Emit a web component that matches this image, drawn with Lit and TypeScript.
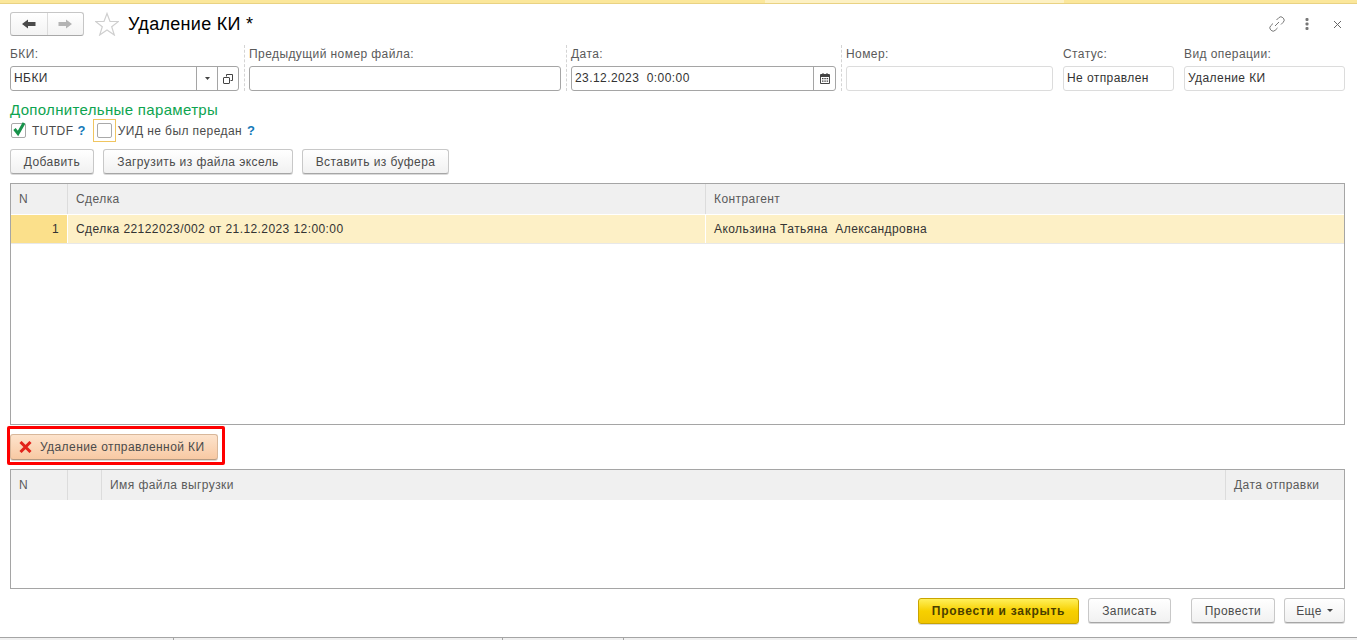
import {LitElement, html, css} from 'lit';
import {customElement} from 'lit/decorators.js';

@customElement('app-root')
class AppRoot extends LitElement {

    render() {
        return html`
            <div class="top-strip"><span class="lighter"></span></div>

            <header class="title-bar">
                <div class="nav">
                    <span class="nav-btn">
                        <svg width="16" height="12" viewBox="0 0 16 12"><path fill="#4a4a4a" d="M1 6l6-4.500V4h7.500v4H7v2.500z"/></svg>
                    </span>
                    <span class="nav-btn">
                        <svg width="16" height="12" viewBox="0 0 16 12"><path fill="#b4b4b4" d="M15 6L9 1.500V4H1.500v4H9v2.500z"/></svg>
                    </span>
                </div>
                <svg class="star" width="24" height="24" viewBox="0 0 24 24"><path fill="#fff" stroke="#cfcfcf" stroke-width="1.200" d="M12 1.500l3 8h8.500l-6.800 5.200 2.600 8.300-7.300-5.100-7.300 5.100 2.600-8.300L.5 9.500H9z"/></svg>
                <h1>Удаление КИ *</h1>
                <div class="window-icons">
                    <svg width="16" height="16" viewBox="0 0 16 16"><g fill="none" stroke="#777" stroke-width="1"><path d="M6 10l4-4"/><path d="M7.500 4l2.300-2.300a2.900 2.900 0 0 1 4.100 0l.4.400a2.900 2.900 0 0 1 0 4.100L12 8.500"/><path d="M8.500 12l-2.300 2.300a2.900 2.900 0 0 1-4.100 0l-.4-.4a2.900 2.900 0 0 1 0-4.100L4 7.500"/></g></svg>
                    <svg width="4" height="12" viewBox="0 0 4 12"><g fill="#777"><rect x=".5" y="0" width="3" height="3" rx="1"/><rect x=".5" y="4.500" width="3" height="3" rx="1"/><rect x=".5" y="9" width="3" height="3" rx="1"/></g></svg>
                    <svg class="close" width="9" height="9" viewBox="0 0 9 9"><path fill="none" stroke="#666" stroke-width="1" d="M1 1l7 7M8 1L1 8"/></svg>
                </div>
            </header>

            <section class="fields">
                <div class="field">
                    <label>БКИ:</label>
                    <div class="input">
                        <span class="value">НБКИ</span>
                        <span class="addon narrow"><svg width="5" height="3" viewBox="0 0 5 3"><path fill="#444" d="M0 0h5L2.500 3z"/></svg></span>
                        <span class="addon">
                            <svg width="10" height="10" viewBox="0 0 10 10"><g fill="none" stroke="#444" stroke-width="1"><path d="M3.500 2.500v-2h6v6h-2"/><rect x=".5" y="3.500" width="6" height="6" rx=".5"/></g></svg>
                        </span>
                    </div>
                </div>
                <div class="sep"></div>
                <div class="field">
                    <label>Предыдущий номер файла:</label>
                    <div class="input"></div>
                </div>
                <div class="sep"></div>
                <div class="field">
                    <label>Дата:</label>
                    <div class="input">
                        <span class="value">23.12.2023&nbsp; 0:00:00</span>
                        <span class="addon wide">
                            <svg width="10" height="11" viewBox="0 0 10 11"><path fill="#444" d="M1 1h1.500V0h1v1h3V0h1v1H9q1 0 1 1v8q0 1-1 1H1q-1 0-1-1V2q0-1 1-1z"/><path fill="#fff" d="M1 4h8v6H1z"/><path fill="#444" d="M2 5h1.500v1.300H2zM4.300 5h1.500v1.300H4.300zM6.600 5h1.500v1.300H6.600zM2 7.500h1.500v1.300H2zM4.300 7.500h1.500v1.300H4.300zM6.600 7.500h1.500v1.300H6.600z"/></svg>
                        </span>
                    </div>
                </div>
                <div class="sep"></div>
                <div class="field spaced">
                    <label>Номер:</label>
                    <div class="input light"></div>
                </div>
                <div class="field spaced">
                    <label>Статус:</label>
                    <div class="input light"><span class="value">Не отправлен</span></div>
                </div>
                <div class="field">
                    <label>Вид операции:</label>
                    <div class="input light"><span class="value">Удаление КИ</span></div>
                </div>
            </section>

            <div class="group-title">Дополнительные параметры</div>

            <div class="checks">
                <span class="check">
                    <svg width="16" height="16" viewBox="0 0 16 16"><path fill="none" stroke="#17924a" stroke-width="3" d="M3.500 7l3.500 4.500 6-10.500"/></svg>
                </span>
                <span class="check-label">TUTDF</span>
                <span class="help first">?</span>
                <span class="focus-frame"><span class="check"></span></span>
                <span class="check-label">УИД не был передан</span>
                <span class="help">?</span>
            </div>

            <div class="toolbar">
                <button style="width:84px">Добавить</button>
                <button style="width:190px">Загрузить из файла эксель</button>
                <button style="width:147px">Вставить из буфера</button>
            </div>

            <section class="table first-table">
                <div class="thead">
                    <span class="th n">N</span>
                    <span class="th deal">Сделка</span>
                    <span class="th grow">Контрагент</span>
                </div>
                <div class="row">
                    <span class="td n current">1</span>
                    <span class="td deal">Сделка 22122023/002 от 21.12.2023 12:00:00</span>
                    <span class="td grow">Акользина Татьяна&nbsp; Александровна</span>
                </div>
            </section>

            <div class="highlight">
                <button class="danger">
                    <svg width="13" height="12" viewBox="0 0 13 12"><path fill="none" stroke="#e2231a" stroke-width="3" d="M1.500 1l10 10M11.500 1l-10 10"/></svg>
                    <span>Удаление отправленной КИ</span>
                </button>
            </div>

            <section class="table second-table">
                <div class="thead">
                    <span class="th n">N</span>
                    <span class="th pic"></span>
                    <span class="th grow">Имя файла выгрузки</span>
                    <span class="th sent">Дата отправки</span>
                </div>
            </section>

            <footer class="actions">
                <button class="primary">Провести и закрыть</button>
                <button style="width:83px">Записать</button>
                <button class="spaced" style="width:84px">Провести</button>
                <button class="more">Еще <svg width="6" height="3" viewBox="0 0 6 3"><path fill="#444" d="M0 0h6L3 3z"/></svg></button>
            </footer>

            <div class="status-bar">
                <span class="tick" style="margin-left:173px"></span>
                <span class="tick" style="margin-left:328px"></span>
                <span class="tick" style="margin-left:120px"></span>
            </div>
        `;
    }

    static styles = css`

        :host {
            display: block;
            width: 1357px;
            height: 640px;
            overflow: hidden;
            background: #fff;
            color: #4b4b4b;
            font-family: "Liberation Sans", Arial, sans-serif;
            font-size: 12px;
            letter-spacing: 0.42px;
        }

        .top-strip {
            height: 3px;
            background: #fbe79b;
            border-bottom: 1px solid #e9d283;
            padding-left: 765px;

            & .lighter {
                display: block;
                width: 299px;
                height: 3px;
                background: #fdf1c4;
            }
        }

        .title-bar {
            display: flex;
            align-items: center;
            height: 24px;
            margin-top: 8px;
            padding: 0 15px 0 10px;

            & h1 {
                margin: 0 0 0 9px;
                font-size: 18px;
                font-weight: 400;
                color: #000;
                letter-spacing: 0.3px;
            }

            & .star {
                margin-left: 11px;
            }
        }

        .nav {
            display: flex;
            width: 74px;
            height: 24px;
            box-sizing: border-box;
            border: 1px solid #c6c6c6;
            border-bottom-color: #a8a8a8;
            border-radius: 3px;
            background: linear-gradient(#fff, #f3f3f3);
        }

        .nav-btn {
            flex: 1;
            display: flex;
            align-items: center;
            justify-content: center;

            & + .nav-btn {
                border-left: 1px solid #dcdcdc;
            }
        }

        .window-icons {
            margin-left: auto;
            display: flex;
            align-items: center;
            gap: 20px;

            & .close {
                margin-left: 4px;
            }
        }

        .fields {
            display: grid;
            grid-template-columns: 229px 10px 312px 10px 265px 10px 217px 121px 161px;
            margin: 9px 0 0 10px;
            height: 46px;
        }

        .field {
            display: flex;
            flex-direction: column;
            margin-top: 2px;
            min-width: 0;

            &.spaced {
                margin-right: 10px;
            }

            & label {
                height: 19px;
                line-height: 15px;
                color: #5a5a5a;
            }
        }

        .sep {
            border-left: 1px dashed #d4d4d4;
            margin-left: 5px;
            width: 0;
        }

        .input {
            display: flex;
            align-items: stretch;
            height: 25px;
            box-sizing: border-box;
            border: 1px solid #a5a5a5;
            border-radius: 3px;
            background: #fff;

            &.light {
                border-color: #dcdcdc;
            }

            & .value {
                flex: 1;
                padding-left: 3px;
                line-height: 23px;
                color: #333;
                white-space: nowrap;
            }
        }

        .addon {
            display: flex;
            align-items: center;
            justify-content: center;
            width: 20px;
            border-left: 1px solid #a5a5a5;

            &.narrow {
                width: 20px;
            }

            &.wide {
                width: 21px;
            }
        }

        .group-title {
            margin: 10px 0 0 10px;
            font-size: 15px;
            line-height: 18px;
            color: #0da450;
            letter-spacing: 0.33px;
        }

        .checks {
            display: flex;
            align-items: center;
            height: 23px;
            margin: 0 0 0 11px;
        }

        .check {
            display: flex;
            width: 15px;
            height: 15px;
            box-sizing: border-box;
            border: 1px solid #a9a9a9;
            border-radius: 2px;
            background: #fff;

            & svg {
                flex: none;
                margin: -2px 0 0 -1px;
            }
        }

        .check-label {
            margin-left: 6px;
        }

        .help {
            margin-left: 5px;
            color: #1479b8;
            font-size: 13px;
            font-weight: 700;

            &.first {
                margin-left: 4px;
                margin-right: 7px;
            }
        }

        .focus-frame {
            display: flex;
            align-items: center;
            justify-content: center;
            width: 23px;
            height: 23px;
            box-sizing: border-box;
            border: 1px solid #f0c560;
        }

        .focus-frame + .check-label {
            margin-left: 2px;
        }

        .toolbar {
            display: flex;
            gap: 9px;
            margin: 7px 0 0 10px;
        }

        button {
            height: 25px;
            padding: 0;
            box-sizing: border-box;
            border: 1px solid #c8c8c8;
            border-bottom-color: #a6a6a6;
            border-radius: 3px;
            background: linear-gradient(#fff, #f1f1f1);
            color: #4b4b4b;
            font: inherit;
            letter-spacing: inherit;
            box-shadow: 0 1px 0 #dadada;
        }

        .table {
            margin: 0 12px 0 10px;
            box-sizing: border-box;
            border: 1px solid #a5a5a5;
        }

        .first-table {
            height: 242px;
            margin-top: 9px;
        }

        .second-table {
            height: 120px;
            margin-top: 4px;
        }

        .thead {
            display: flex;
            height: 30px;
            background: #f0f0f0;
        }

        .row {
            display: flex;
            height: 29px;
            background: #fdf0c6;
            margin-top: 1px;
            border-bottom: 1px solid #e8e8e8;
            box-sizing: border-box;
        }

        .th, .td {
            box-sizing: border-box;
            padding: 0 8px;
            white-space: nowrap;
        }

        .th {
            line-height: 30px;
            color: #5a5a5a;
            border-right: 1px solid #dcdcdc;
        }

        .td {
            line-height: 28px;
            color: #333;
            border-right: 1px solid #fff;
        }

        .n {
            width: 57px;
        }

        .deal {
            width: 638px;
        }

        .pic {
            width: 34px;
        }

        .grow {
            flex: 1;
        }

        .sent {
            width: 118px;
            border-right: 0;
        }

        .first-table .grow {
            border-right: 0;
        }

        .current {
            background: #fbe08b;
            text-align: right;
        }

        .highlight {
            display: flex;
            width: 218px;
            height: 39px;
            box-sizing: border-box;
            margin: 1px 0 0 7px;
            padding: 5px 4px 2px 0;
            border: 3px solid #f00;
            border-radius: 2px;
        }

        .danger {
            display: flex;
            align-items: center;
            gap: 8px;
            width: 208px;
            height: 26px;
            padding-left: 8px;
            border-color: #d8b79a;
            border-bottom-color: #b59a82;
            background: linear-gradient(#fde3cc, #f8c9a3);
        }

        .actions {
            display: flex;
            justify-content: flex-end;
            gap: 9px;
            margin: 9px 12px 0 0;

            & .spaced {
                margin-left: 11px;
            }
        }

        .primary {
            width: 161px;
            height: 26px;
            border-color: #c9a400;
            background: linear-gradient(#fff05a, #f7d000 50%, #f0c400);
            color: #4a3f00;
            font-weight: 700;
            letter-spacing: 0.72px;
        }

        .more {
            width: 61px;
            display: flex;
            align-items: center;
            justify-content: center;
            gap: 5px;
        }

        .status-bar {
            display: flex;
            margin-top: 13px;
            height: 3px;
            background: #f0f0f0;
            border-top: 1px solid #a5a5a5;
        }

        .tick {
            width: 1px;
            height: 3px;
            background: #a5a5a5;
        }
    `;
}
